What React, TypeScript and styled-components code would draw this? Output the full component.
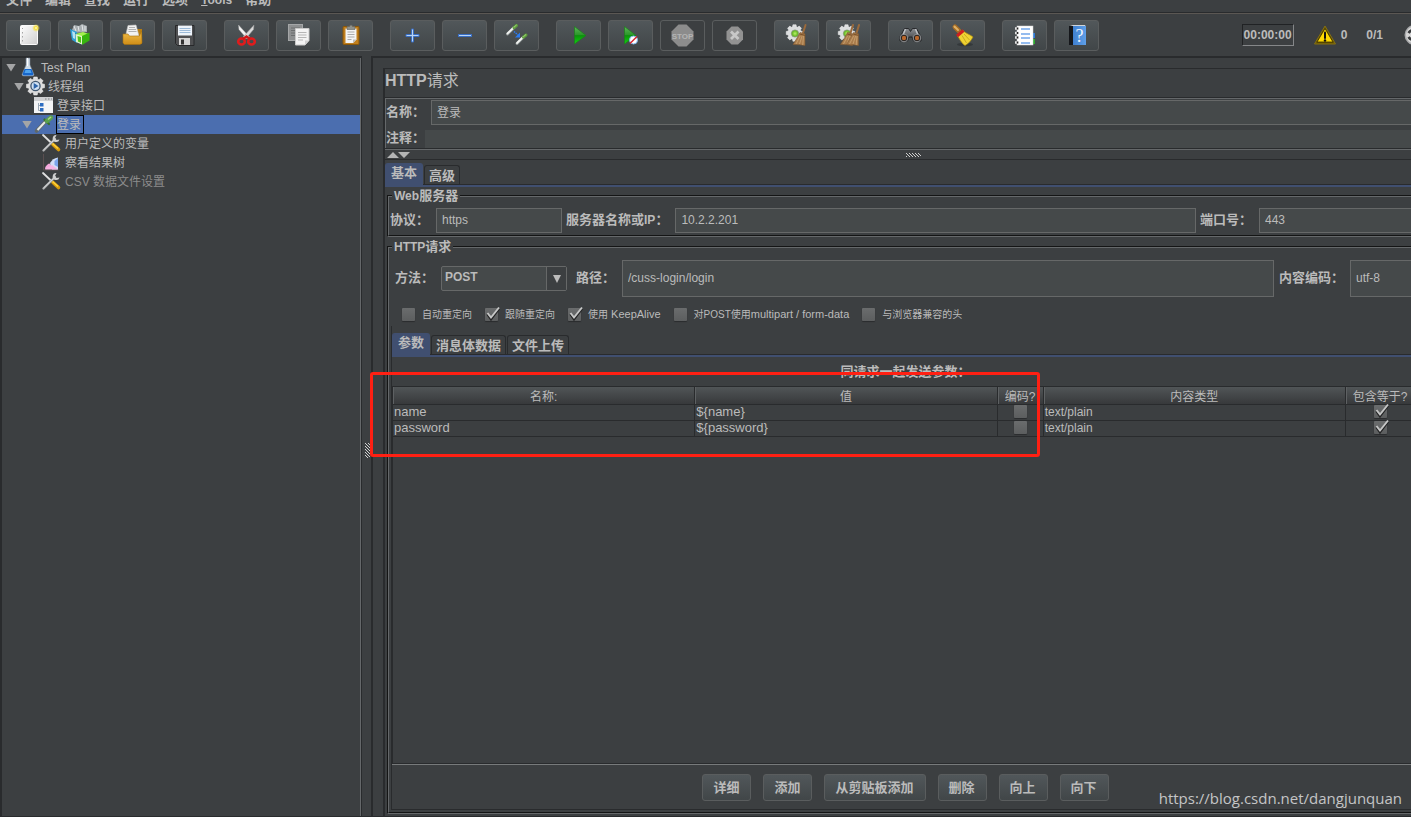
import React from "react";
import styled, { createGlobalStyle, css } from "styled-components";

const c = {
  bg: "#3c3f41",
  dark: "#292b2d",
  light: "#65686a",
  field: "#45494a",
  fieldBorder: "#666868",
  text: "#bbbbbb",
  blue: "#404f70",
  select: "#4b6eaf",
};

const Global = createGlobalStyle`
  *, *::before, *::after { box-sizing: border-box; }
  body {
    margin: 0;
    background: ${c.bg};
    color: ${c.text};
    font: 12px/16px "Liberation Sans", "Noto Sans CJK SC", sans-serif;
    overflow: hidden;
  }
  button, input, select { font: inherit; color: inherit; margin: 0; }
`;

const Frame = styled.div`
  position: relative;
  display: flex;
  flex-direction: column;
  height: 100vh;
  overflow: hidden;
  border-bottom: 1px solid ${c.dark};
`;

/* Chinese UI text runs one pixel larger than the Latin text beside it. */
const Zh = styled.span`
  font-size: 13px;
`;

/* ---------- menu bar ---------- */
const MenuBar = styled.nav`
  display: flex;
  align-items: flex-end;
  gap: 13px;
  height: 13px;
  padding: 0 6px 4px;
  border-bottom: 1px solid ${c.dark};
  font-weight: bold;
  flex: none;
`;
const MenuItem = styled.a`
  color: inherit;
  text-decoration: none;
  line-height: 16px;
  white-space: nowrap;
`;

/* ---------- tool bar ---------- */
const ToolBar = styled.div`
  display: flex;
  align-items: flex-start;
  gap: 17px;
  height: 43px;
  padding: 6px 0 0 6px;
  border-top: 1px solid #5b5753;
  overflow: hidden;
  flex: none;
`;
const ToolGroup = styled.div`
  display: flex;
  gap: 7px;
`;
const ToolButton = styled.button`
  display: flex;
  align-items: center;
  justify-content: center;
  width: 45px;
  height: 31px;
  padding: 0;
  border: 1px solid #5a5d5e;
  border-radius: 3px;
  background: linear-gradient(#51575a, #414648);
  &:disabled {
    background: none;
  }
  svg {
    width: 23px;
    height: 23px;
    overflow: visible;
  }
`;
const Status = styled.div`
  display: flex;
  align-items: center;
  height: 31px;
  margin: 0 -15px 0 auto;
  padding-bottom: 2px;
  font-weight: bold;
`;
const Timer = styled.output`
  width: 52px;
  height: 22px;
  margin-right: 20px;
  border: 1px solid;
  border-color: #202224 #858789 #858789 #202224;
  line-height: 20px;
  text-align: center;
`;
const Warnings = styled.span`
  display: flex;
  align-items: center;
  gap: 5px;
  margin-right: 19px;
`;
const Threads = styled.span`
  margin-right: 21px;
`;

/* ---------- panes ---------- */
const Body = styled.div`
  display: flex;
  flex: 1;
  min-height: 0;
`;
const TreePane = styled.aside`
  width: 362px;
  border: solid ${c.dark};
  border-width: 2px 1px 0 2px;
  box-shadow: inset -1px 0 ${c.light};
  flex: none;
`;
const Divider = styled.div`
  display: flex;
  align-items: center;
  justify-content: flex-end;
  width: 9px;
  padding: 28px 1px 0 0;
  flex: none;
`;
const Main = styled.main`
  display: flex;
  flex: 1;
  min-width: 0;
  padding: 10px 0 0 10px;
  border: solid ${c.dark};
  border-width: 2px 0 0 2px;
  overflow: hidden;
`;
const Editor = styled.div`
  display: flex;
  flex-direction: column;
  flex: 1;
  min-width: 0;
  margin-right: -6px;
  padding-bottom: 2px;
  border: solid ${c.dark};
  border-width: 1px 0 0 2px;
`;

/* ---------- tree ---------- */
const Tree = styled.ul`
  list-style: none;
  margin: 0;
  padding: 0 1px 0 0;
`;
const TreeRow = styled.li<{ $depth: number; $selected?: boolean; $off?: boolean }>`
  display: flex;
  align-items: center;
  height: 19px;
  padding-left: ${(p) => 4 + p.$depth * 8}px;
  background: ${(p) => (p.$selected ? c.select : "none")};
  color: ${(p) => (p.$off ? "#8c8c8c" : c.text)};
  > svg {
    flex: none;
    margin: 0 3px 1px 0;
    overflow: visible;
  }
`;
const Arrow = styled.span<{ $open?: boolean }>`
  width: 10px;
  height: 8px;
  margin-right: 2px;
  clip-path: polygon(0 0, 100% 0, 50% 100%);
  background: ${(p) => (p.$open ? "#a4a5a6" : "none")};
  flex: none;
`;
const TreeText = styled.span<{ $boxed?: boolean }>`
  height: 17px;
  padding: 1px 2px 0 0;
  line-height: 17px;
  outline: ${(p) => (p.$boxed ? "1px solid #000" : "none")};
`;

/* ---------- form parts ---------- */
const Title = styled.h1`
  margin: 0;
  height: 29px;
  border-bottom: 1px solid ${c.dark};
  font-size: 16px;
  line-height: 24px;
  span {
    font-weight: normal;
  }
`;
const NameBox = styled.div`
  display: flex;
  flex-direction: column;
  gap: 5px;
  padding-top: 1px;
  border: solid ${c.light};
  border-width: 1px 0 0 1px;
  box-shadow: 0 1px ${c.dark};
  margin-bottom: 1px;
`;
const Row = styled.div<{ $pad?: number }>`
  display: flex;
  align-items: center;
  padding-left: ${(p) => p.$pad || 0}px;
`;
const Label = styled.label<{ $before?: number; $after?: number }>`
  margin: 0 ${(p) => p.$after ?? 7}px 0 ${(p) => p.$before ?? 0}px;
  padding-bottom: 2px;
  font-weight: bold;
  white-space: nowrap;
  flex: none;
`;
const Field = styled.input<{ $w?: number; $tall?: boolean; $plain?: boolean }>`
  ${(p) => (p.$w ? css`width: ${p.$w}px; flex: none;` : css`flex: 1; min-width: 0;`)}
  height: ${(p) => (p.$tall ? 37 : p.$plain ? 18 : 25)}px;
  padding: 0 5px 2px;
  border: ${(p) => (p.$plain ? "0" : `1px solid ${c.fieldBorder}`)};
  background: ${c.field};
  outline: none;
`;
const Splitter = styled.div`
  display: flex;
  align-items: center;
  height: 10px;
  padding-left: 2px;
  border-top: 1px solid ${c.light};
`;
const SplitGrip = styled.span`
  display: flex;
  justify-content: center;
  flex: 1;
`;
const TabPane = styled.section<{ $edge?: boolean }>`
  display: flex;
  flex-direction: column;
  flex: 1;
  min-height: 0;
  ${(p) =>
    p.$edge
      ? css`margin: 0 0 2px 2px; border: solid ${c.dark}; border-width: 0 0 1px 1px;`
      : css`border-top: 1px solid ${c.dark};`}
`;
const Tabs = styled.div<{ $h: number }>`
  display: flex;
  align-items: flex-end;
  gap: 1px;
  height: ${(p) => p.$h}px;
  border-bottom: 2px solid ${c.blue};
  box-shadow: inset 0 -1px ${c.dark};
  flex: none;
`;
const Tab = styled.button<{ $active?: boolean }>`
  height: ${(p) => (p.$active ? 22 : 20)}px;
  padding: 0 4px;
  border: 1px solid ${c.dark};
  border-bottom: 0;
  border-radius: 3px 3px 0 0;
  background: none;
  font-size: 13px;
  font-weight: bold;
  line-height: 18px;
  ${(p) => p.$active && css`
    padding: 0 5px 3px;
    border-color: ${c.blue};
    background: ${c.blue};
  `}
`;
const Group = styled.fieldset<{ $fill?: boolean }>`
  display: flex;
  flex-direction: column;
  min-width: 0;
  margin: ${(p) => (p.$fill ? "2px 0 0 2px" : "1px 0 0 2px")};
  padding: ${(p) => (p.$fill ? "5px 0 0" : "4px 0 2px")};
  border: 2px groove ${c.light};
  ${(p) => p.$fill && css`flex: 1; min-height: 0;`}
`;
const Legend = styled.legend`
  margin-left: 3px;
  padding: 0 2px;
  font-weight: bold;
  line-height: 16px;
`;
const SelectWrap = styled.div`
  display: grid;
  grid-template-columns: 1fr 20px;
  align-items: stretch;
  width: 126px;
  height: 25px;
  border: 1px solid ${c.fieldBorder};
  border-radius: 2px;
  background: ${c.field};
  flex: none;
`;
const Select = styled.select`
  grid-area: 1 / 1 / 2 / 3;
  appearance: none;
  padding: 0 0 4px 3px;
  border: 0;
  background: none;
  font-weight: bold;
  outline: none;
`;
const SelectArrow = styled.span`
  grid-area: 1 / 2 / 2 / 3;
  display: flex;
  align-items: center;
  justify-content: center;
  border-left: 1px solid ${c.fieldBorder};
  background: ${c.bg};
  pointer-events: none;
`;
const Checks = styled.div`
  display: flex;
  align-items: center;
  gap: 13px;
  height: 24px;
  margin-top: 5px;
  padding-left: 13px;
  font-size: 11px;
  flex: none;
`;
const CheckLabel = styled.label`
  display: flex;
  align-items: center;
  gap: 7px;
  white-space: nowrap;
`;
const Small = styled.span`
  font-size: 10px;
`;
const TickBox = styled.span`
  display: inline-grid;
  width: 13px;
  height: 13px;
  vertical-align: top;
  > * { grid-area: 1 / 1; }
  svg { overflow: visible; pointer-events: none; }
`;
const Tick = styled.input`
  appearance: none;
  width: 13px;
  height: 13px;
  border-radius: 1px;
  background: linear-gradient(#6a6c6d, #5c5e5f);
  box-shadow: 0 1px 1px #2a2c2e;
`;

/* ---------- parameters table ---------- */
const Caption = styled.h2`
  margin: 0;
  height: 29px;
  padding-left: 4px;
  font-size: 13px;
  line-height: 30px;
  text-align: center;
  flex: none;
`;
const TableArea = styled.div`
  flex: 1;
  min-height: 0;
  border: solid ${c.dark};
  border-width: 1px 0 1px 1px;
  box-shadow: 0 1px #777a7b;
`;
const Table = styled.table`
  width: 100%;
  table-layout: fixed;
  border-collapse: separate;
  border-spacing: 0;
`;
const Th = styled.th<{ $w?: number }>`
  width: ${(p) => (p.$w ? p.$w + "px" : "auto")};
  height: 18px;
  padding: 3px 0 0;
  border-right: 1px solid ${c.dark};
  border-bottom: 1px solid ${c.dark};
  box-shadow: inset 1px 0 #5e6163;
  background: linear-gradient(#515557, #37393b);
  font-weight: normal;
  line-height: 14px;
  white-space: nowrap;
`;
const Td = styled.td<{ $center?: boolean; $small?: boolean }>`
  height: 16px;
  padding: 0 1px;
  border-right: 1px solid ${c.dark};
  border-bottom: 1px solid ${c.dark};
  font-size: ${(p) => (p.$small ? 12 : 13)}px;
  line-height: 14px;
  text-align: ${(p) => (p.$center ? "center" : "left")};
  vertical-align: top;
`;
const Actions = styled.div`
  display: flex;
  justify-content: center;
  gap: 12px;
  height: 45px;
  padding: 10px 0 0 4px;
  flex: none;
`;
const ActionButton = styled.button`
  height: 27px;
  padding: 0 11px 0 10px;
  border: 1px solid #5a5d5e;
  border-radius: 3px;
  background: linear-gradient(#51575a, #414648);
  font-size: 13px;
  font-weight: bold;
`;

/* ---------- overlays ---------- */
const Highlight = styled.div`
  position: absolute;
  left: 370px;
  top: 372px;
  width: 670px;
  height: 85px;
  border: 3px solid #ff2013;
  border-radius: 3px;
  pointer-events: none;
`;
const Watermark = styled.a`
  position: absolute;
  right: 9px;
  bottom: 8px;
  color: #c4c5c6;
  font: 15px/20px "Open Sans", sans-serif;
  text-decoration: none;
`;

/* ---------- drawings ---------- */
const Svg = ({ children, w = 23, h = 23 }: { children: React.ReactNode; w?: number; h?: number }) => (
  <svg width={w} height={h} viewBox={`0 0 ${w} ${h}`} aria-hidden="true">{children}</svg>
);

const gearPoints = (cx: number, cy: number, r: number, n = 8) => {
  const pts: string[] = [];
  for (let i = 0; i < n; i++) {
    const a = (i * 2 * Math.PI) / n;
    [[-0.3, 0.78], [-0.19, 1], [0.19, 1], [0.3, 0.78]].forEach(([d, k]) =>
      pts.push(`${(cx + Math.cos(a + d) * r * k).toFixed(2)},${(cy + Math.sin(a + d) * r * k).toFixed(2)}`)
    );
  }
  return pts.join(" ");
};

const Gradients = () => (
  <svg width="0" height="0" style={{ position: "absolute" }} aria-hidden="true">
    <defs>
      <linearGradient id="paper" x1="0" y1="0" x2="1" y2="1"><stop stopColor="#fff" /><stop offset="1" stopColor="#cfcfcf" /></linearGradient>
      <linearGradient id="gold" x1="0" y1="0" x2="0" y2="1"><stop stopColor="#f3c04c" /><stop offset="1" stopColor="#cf8d17" /></linearGradient>
      <linearGradient id="green" x1="0" y1="0" x2="0" y2="1"><stop stopColor="#5cb858" /><stop offset=".48" stopColor="#2c962a" /><stop offset=".52" stopColor="#0b930b" /><stop offset="1" stopColor="#10d410" /></linearGradient>
      <linearGradient id="steel" x1="0" y1="0" x2="0" y2="1"><stop stopColor="#8b8e92" /><stop offset="1" stopColor="#3a3c3f" /></linearGradient>
      <linearGradient id="book" x1="0" y1="0" x2="1" y2="0"><stop stopColor="#3f80d0" /><stop offset="1" stopColor="#5f9fe8" /></linearGradient>
      <radialGradient id="spark"><stop stopColor="#fffdd0" /><stop offset=".4" stopColor="#f6e14c" /><stop offset="1" stopColor="#f6e14c" stopOpacity="0" /></radialGradient>
      <radialGradient id="lime"><stop stopColor="#b8f26a" /><stop offset="1" stopColor="#4fa80c" /></radialGradient>
    </defs>
  </svg>
);

const Straw = ({ x = 0 }: { x?: number }) => (
  <g transform={`translate(${x} 0)`}>
    <path d="M18 1 15.5 9" stroke="#9a6a3c" strokeWidth="2" strokeLinecap="round" />
    <path d="M12.5 8.5 17.5 9.8 17.5 21.5 12 20.8 5.5 20.5 9.5 14Z" fill="#a97c4c" stroke="#7d5730" strokeWidth=".6" />
    <path d="M12.6 12 8.5 20M14.6 12 12 20M16 12 15.2 21" stroke="#d1ab78" strokeWidth=".7" />
    <path d="M12.2 10 17.5 11.4" stroke="#7b5228" strokeWidth="1" />
  </g>
);
const CleanGear = () => (
  <>
    <polygon points={gearPoints(9.5, 9, 8.4, 8)} fill="#dcdedf" stroke="#f4f4f4" strokeWidth=".5" />
    <circle cx="10" cy="9.5" r="3.6" fill="url(#lime)" stroke="#8b9a80" strokeWidth=".8" />
  </>
);
const Dropper = ({ x, y }: { x: number; y: number }) => (
  <g transform={`translate(${x} ${y})`} strokeLinecap="round">
    <path d="M1 9.5 7.5 3" stroke="#8d9494" strokeWidth="3" />
    <path d="M1 9 7.2 3" stroke="#f1f3f1" strokeWidth="1.8" />
    <path d="M7.5 3.2 10 1" stroke="#5c9c3c" strokeWidth="3" />
    <path d="M7.5 2.7 9.8 .7" stroke="#a6d47c" strokeWidth="1" />
  </g>
);

const icons: Record<string, React.ReactNode> = {
  new: (
    <Svg>
      <rect x="3.5" y="1.5" width="17" height="19" rx="1" fill="url(#paper)" stroke="#fafafa" />
      <path d="M5.500 4v1M5.500 8v1.500M5.500 12v1.500M5.500 16v1.500" stroke="#a5a5a5" />
      <circle cx="19" cy="4" r="4" fill="url(#spark)" />
    </Svg>
  ),
  templates: (
    <Svg>
      <path d="M3 6 5 1 10 2 13 0 18 2 18 8 4 9Z" fill="#a9afb2" />
      <path d="M5 2 7 7M9 2 10 7M13 1 14 7M16 2 16 7" stroke="#e4e8ea" />
      <path d="M1 5 8 8 8 19 3 16Z" fill="#2d9fd8" /><path d="M3 7 6 8.500 6 15 4 14Z" fill="#b7e3f5" />
      <path d="M6 9 13 11 13 20.500 7 18Z" fill="#1f7fb5" />
      <path d="M6.500 10 14 8 20 10 13 13Z" fill="#a2f24d" />
      <path d="M6.500 10 13 12 13 20.500 7 18Z" fill="#e4f7ca" /><path d="M8.500 12 12 13 12 19 9 17.500Z" fill="#50c21a" />
      <path d="M13 12 20.500 8.500 20.500 16.500 13 21Z" fill="#37b40f" />
    </Svg>
  ),
  open: (
    <Svg>
      <path d="M15 5h6v15h-6Z" fill="#b77d12" />
      <path d="M5 10 7 1.500 15 1 18 12 5 13Z" fill="#f2f2f2" stroke="#c6c6c6" strokeWidth=".6" />
      <path d="M8 3.500h6M7.500 5.500h7.500M7.500 7.500h8" stroke="#a0a0a0" strokeWidth=".8" />
      <path d="M2 10h5l1.500 2H18.500L20.500 7l.5 12-2 1.500H3.500L2 19Z" fill="url(#gold)" stroke="#a8720e" strokeWidth=".6" />
    </Svg>
  ),
  save: (
    <Svg>
      <path d="M2.500 1.500h18.500v20H4.500l-2-2Z" fill="#4f5052" stroke="#27282a" />
      <rect x="5" y="1.500" width="14" height="10" fill="#eef4fa" />
      <path d="M6.500 4.500h11M6.500 6.500h11M6.500 8.500h11" stroke="#9dbbd9" />
      <rect x="6" y="14" width="11" height="7" fill="#d5d5d5" /><rect x="8" y="15.500" width="3" height="5" fill="#333" />
    </Svg>
  ),
  cut: (
    <Svg>
      <path d="M3.500 1 4 5.500 12 15 14.500 13Z" fill="#f3f3f3" stroke="#a8a8a8" strokeWidth=".5" />
      <path d="M19 1 18.500 5.500 10.500 15 8 13Z" fill="#dadada" stroke="#999" strokeWidth=".5" />
      <ellipse cx="6.500" cy="17.500" rx="3.300" ry="3" fill="none" stroke="#e01c1c" strokeWidth="2.600" />
      <ellipse cx="16.500" cy="17.500" rx="3.300" ry="3" fill="none" stroke="#e01c1c" strokeWidth="2.600" />
      <path d="M8 15 11.500 12.500 15 15" fill="none" stroke="#d01616" strokeWidth="2.600" />
    </Svg>
  ),
  copy: (
    <Svg>
      <rect x="1.500" y=".5" width="14" height="16" fill="#8d8f90" stroke="#a4a6a7" />
      <path d="M4 4h9M4 6.500h9M4 9h4M4 11.500h4" stroke="#6c6e6f" />
      <path d="M8.500 4.500h13.500v12l-4 4.500H8.500Z" fill="#f3f3f3" stroke="#c9c9c9" />
      <path d="M11 8.500h8.500M11 11h8.500M11 13.500h8.500M11 16h5" stroke="#b5b5b5" />
      <path d="M22 16.500h-4V21Z" fill="#d0d0d0" />
    </Svg>
  ),
  paste: (
    <Svg>
      <rect x="4" y="2.500" width="16" height="18" rx="1" fill="#c07f1d" stroke="#8a5608" />
      <path d="M6.500 4.500h11v11l-3.500 3.500H6.500Z" fill="#f4f4f4" />
      <path d="M8.500 8h7M8.500 10.500h7M8.500 13h7M8.500 15.500h4" stroke="#ababab" />
      <path d="M17.500 15.500H14V19Z" fill="#bdbdbd" />
      <path d="M8 2.500h2.500a1.500 1.500 0 0 1 3 0H16v3H8Z" fill="#8f918c" stroke="#60625e" strokeWidth=".6" />
    </Svg>
  ),
  plus: (<Svg><path d="M10.500 5h2v5.500h5.500v2h-5.500v5.500h-2v-5.500H5v-2h5.500Z" fill="#b9d5f5" stroke="#3a6fc4" /></Svg>),
  minus: (<Svg><rect x="5.500" y="10.500" width="13" height="2" fill="#b9d5f5" stroke="#3a6fc4" /></Svg>),
  toggle: (
    <Svg>
      <Dropper x={1.5} y={0.5} /><Dropper x={11} y={10} />
      <path d="M9 7.500 13 11" stroke="#2b7bf0" strokeWidth="1.600" strokeDasharray="1.500 .8" /><path d="M15 8.500v5h-5Z" fill="#2b7bf0" />
    </Svg>
  ),
  play: (<Svg><path d="M7.500 2.500 19 11.500 7.500 20Z" fill="url(#green)" stroke="#1d7d1d" strokeWidth=".7" /></Svg>),
  playNow: (
    <Svg>
      <path d="M5.500 2.500 17 11.500 5.500 20Z" fill="url(#green)" stroke="#1d7d1d" strokeWidth=".7" />
      <circle cx="14.500" cy="16" r="4" fill="#fff" stroke="#7fb4e8" /><path d="M11 19.500 18 12.500" stroke="#d8232a" strokeWidth="1.500" />
    </Svg>
  ),
  stop: (
    <Svg>
      <path d="M7.500.5h8l7 7v8l-7 7h-8l-7-7v-8Z" fill="#8c8c8c" />
      <text x="11.500" y="14.500" textAnchor="middle" fontSize="8" fontWeight="bold" fill="#b4b4b4" fontFamily="Liberation Sans, sans-serif">STOP</text>
    </Svg>
  ),
  shutdown: (
    <Svg>
      <path d="M8.500 2.500h6.500l5 5v8l-5 5h-6.500l-5-5v-8Z" fill="#929292" />
      <path d="m8 7.500 7.500 7.500M15.500 7.500l-7.500 7.500" stroke="#c8c8c8" strokeWidth="2.800" />
    </Svg>
  ),
  clear: (<Svg><CleanGear /><Straw x={2.5} /></Svg>),
  clearAll: (<Svg><CleanGear /><Straw x={-2} /><Straw x={4} /></Svg>),
  search: (
    <Svg>
      <path d="M5.500 4.500h4l2 3 2-3h4L22 13v4h-7.500l-1.500-4h-3l-1.500 4H1v-4Z" fill="url(#steel)" stroke="#17181a" strokeWidth=".8" />
      <path d="M6.500 5 4 11M16.500 5 19 11" stroke="#c0c3c6" strokeWidth="1.400" />
      <circle cx="5" cy="14" r="3.800" fill="#24201e" stroke="#9a9c9f" strokeWidth=".9" /><circle cx="18" cy="14" r="3.800" fill="#24201e" stroke="#9a9c9f" strokeWidth=".9" />
      <circle cx="5" cy="14" r="2.200" fill="#b9672c" /><circle cx="18" cy="14" r="2.200" fill="#b9672c" />
    </Svg>
  ),
  resetSearch: (
    <Svg>
      <ellipse cx="14" cy="20.500" rx="8" ry="1.800" fill="#24272a" opacity=".5" />
      <path d="M4 3 8 7" stroke="#a56c25" strokeWidth="5" strokeLinecap="round" /><path d="M3.500 2.500 7 6" stroke="#deb066" strokeWidth="2" strokeLinecap="round" />
      <path d="M12 6.500C14 9 20 11 22 13c-2 4-5 7-8 8.500C11 20 8 14 6.500 12Z" fill="#efd333" stroke="#ab8b10" strokeWidth=".7" />
      <path d="M11 11.500 15.500 19M13 10 18.500 16" stroke="#b99a17" strokeWidth=".7" />
      <path d="M6 12 12.500 6.500" stroke="#cf1f1f" strokeWidth="3" />
    </Svg>
  ),
  functions: (
    <Svg>
      <rect x="17" y="9" width="5" height="5" fill="#2c7ad6" /><rect x="17" y="15" width="5" height="5" fill="#2da82d" />
      <rect x="4" y="2" width="16" height="19" fill="#fff" stroke="#d5d5d5" strokeWidth=".5" />
      <path d="M8 5h9M8 10h9M8 14h9M8 19h9" stroke="#2a7be0" strokeWidth="1.200" />
      <path d="M2 4.500h4M2 9h4M2 13.500h4M2 18.500h4" stroke="#e6e6e6" strokeWidth="2.600" />
      <path d="M4.500 3.500v2M4.500 8v2M4.500 12.500v2M4.500 17.500v2" stroke="#222" strokeWidth="1.500" />
    </Svg>
  ),
  help: (
    <Svg>
      <path d="M4 2h4v19H4Z" fill="#15171b" /><path d="M5 1h15l.500 1H8Z" fill="#d2d6da" />
      <path d="M8 2h13v19H8Z" fill="url(#book)" />
      <text x="14.500" y="18" textAnchor="middle" fontSize="18" fill="#eef5fc" fontFamily="Liberation Serif, serif">?</text>
    </Svg>
  ),
  warning: (
    <Svg w={22} h={20}>
      <path d="M11 1 21.500 19H.5Z" fill="#6b5600" stroke="#857012" strokeLinejoin="round" /><path d="M11 3.500 19 17H3Z" fill="#ffd900" stroke="#332b00" strokeWidth=".8" />
      <path d="M11 7.500v5.500" stroke="#111" strokeWidth="2" strokeLinecap="round" /><circle cx="11" cy="15.500" r="1.200" fill="#111" />
    </Svg>
  ),
  remote: (
    <Svg w={22} h={20}>
      <circle cx="10.500" cy="10" r="10" fill="#a9aaab" /><circle cx="10.500" cy="10" r="8.500" fill="#d6d6d6" />
      <path d="M4.500 8c2-3 5-3 7-2M4.500 12c2 3 5 3 7 2" stroke="#37393b" strokeWidth="2.600" fill="none" />
    </Svg>
  ),
  plan: (
    <Svg w={20} h={18}>
      <path d="M8 0h4v7l4 9.500q0 1.500-2 1.500h-8q-2 0-2-1.500l4-9.500Z" fill="#cfdbe6" stroke="#75828d" strokeWidth=".6" />
      <path d="M6.500 11h7l2 5q0 1.500-2 1.500H6.500q-2 0-2-1.500Z" fill="#1767cb" /><path d="M7.500 12h5l1 3H6.500Z" fill="#4fa4ee" /><path d="M9.500 0v8" stroke="#fff" />
    </Svg>
  ),
  group: (
    <Svg w={19} h={18}>
      <polygon points={gearPoints(9.5, 9, 9.2, 8)} fill="#dcdcdc" stroke="#f5f5f5" strokeWidth=".5" />
      <circle cx="9.500" cy="9" r="4.600" fill="#cfe0f2" stroke="#40576f" strokeWidth="1.300" /><path d="M7.700 6 12.500 9 7.700 12Z" fill="#2c63a8" />
    </Svg>
  ),
  page: (
    <Svg w={20} h={18}>
      <rect x="0" y="1" width="19" height="16" fill="#f4f5f6" /><path d="M0 1h19v4H0Z" fill="#cfd1d3" /><path d="M11 3h1.500M14 3h1.500M17 3h1" stroke="#7f8285" />
      <path d="M4.500 7v7.500h3M4.500 9.500h3" fill="none" stroke="#9aa7b5" /><rect x="6" y="7" width="3.500" height="3.500" fill="#2c6cc0" /><rect x="6" y="12" width="3.500" height="3.500" fill="#2c6cc0" />
    </Svg>
  ),
  sampler: (
    <Svg w={20} h={18}>
      <path d="M2.500 16 11 7" stroke="#60686a" strokeWidth="3.600" strokeLinecap="round" /><path d="M3.500 15 11 7" stroke="#e6ebe8" strokeWidth="2" />
      <path d="m10.500 4.500 4.500 4.500" stroke="#37702c" strokeWidth="2.200" strokeLinecap="round" /><path d="M13 6 17 2.500" stroke="#5aa04c" strokeWidth="4.400" strokeLinecap="round" /><path d="M14 4.500 17 2" stroke="#a8d88c" strokeWidth="1.400" />
    </Svg>
  ),
  config: (
    <Svg w={20} h={18}>
      <path d="M1 1 10 9.500" stroke="#e0e0e0" strokeWidth="1.800" strokeLinecap="round" /><path d="M11 10.500 16.500 15.500" stroke="#d79b0b" strokeWidth="3.600" strokeLinecap="round" /><path d="M10.500 9.500 16 14.500" stroke="#ffd23c" strokeWidth="1.600" />
      <path d="M1.500 16.500 13 5" stroke="#a8aaab" strokeWidth="2.400" strokeLinecap="round" /><path d="M1.500 16 12 6" stroke="#e8e8e8" strokeWidth=".8" />
      <path d="M14.500 1a3.500 3.500 0 1 0 3 4.500l-3 .5-1.500-2Z" fill="#cfcfcf" />
    </Svg>
  ),
  results: (
    <Svg w={20} h={18}>
      <path d="M1.500 1v16h15" stroke="#5a4f50" fill="none" /><path d="M3 16c0-3 2-4 4-5.500 2 0 3 3.500 4 5.500Z" fill="#f4a9dc" />
      <path d="M8 10c2-3 4-5 8-5.500v12H10Z" fill="#d3dff6" /><path d="M12.500 8 16 5V14l-3.500-2Z" fill="#7aa5ea" /><path d="M3 16.500c3-3.500 5-2.500 7-4.500l6 4.500Z" fill="#f5b4e2" />
    </Svg>
  ),
};

const ResizeGrip = ({ w, h }: { w: number; h: number }) => {
  const dots: React.ReactNode[] = [];
  for (let y = 0; y < h; y++)
    for (let x = 0; x < w; x++)
      if ((x - y + 15) % 3 === 0)
        dots.push(<rect key={`${x}-${y}`} x={x} y={y} width="1" height="1" fill="#d0d0d0" />);
  return <Svg w={w} h={h}>{dots}</Svg>;
};

const Check = ({ checked = false, name, children }: { checked?: boolean; name?: string; children?: React.ReactNode }) => {
  const box = (
    <TickBox>
      <Tick type="checkbox" defaultChecked={checked} aria-label={name} />
      {checked && (
        <svg width="13" height="13" viewBox="0 0 13 13" aria-hidden="true">
          <path d="M2.500 6 6 11 14 .500" fill="none" stroke="#232425" strokeWidth="2.600" />
          <path d="M2.500 5 6 9.500 14 -.500" fill="none" stroke="#c6c7c7" strokeWidth="2" />
        </svg>
      )}
    </TickBox>
  );
  return children ? <CheckLabel>{box}<span>{children}</span></CheckLabel> : box;
};

/* ---------- data ---------- */
const toolGroups: [string, string][][] = [
  [["new", "新建"], ["templates", "模板"], ["open", "打开"], ["save", "保存"]],
  [["cut", "剪切"], ["copy", "复制"], ["paste", "粘贴"]],
  [["plus", "展开"], ["minus", "折叠"], ["toggle", "切换"]],
  [["play", "启动"], ["playNow", "不停顿开始"], ["stop", "停止"], ["shutdown", "关闭"]],
  [["clear", "清除"], ["clearAll", "清除全部"]],
  [["search", "查找"], ["resetSearch", "重置查找"]],
  [["functions", "函数助手"], ["help", "帮助"]],
];

const nodes: { depth: number; icon: string; text: string; open?: boolean; selected?: boolean; off?: boolean }[] = [
  { depth: 0, icon: "plan", text: "Test Plan", open: true },
  { depth: 1, icon: "group", text: "线程组", open: true },
  { depth: 2, icon: "page", text: "登录接口" },
  { depth: 2, icon: "sampler", text: "登录", open: true, selected: true },
  { depth: 3, icon: "config", text: "用户定义的变量" },
  { depth: 3, icon: "results", text: "察看结果树" },
  { depth: 3, icon: "config", text: "CSV 数据文件设置", off: true },
];

const params = [
  { name: "name", value: "${name}", type: "text/plain" },
  { name: "password", value: "${password}", type: "text/plain" },
];

export default function App() {
  return (
    <Frame>
      <Global />
      <Gradients />
      <MenuBar>
        {["文件", "编辑", "查找", "运行", "选项"].map((m) => (
          <MenuItem href="#" key={m}><Zh>{m}</Zh></MenuItem>
        ))}
        <MenuItem href="#"><u>T</u>ools</MenuItem>
        <MenuItem href="#"><Zh>帮助</Zh></MenuItem>
      </MenuBar>

      <ToolBar>
        {toolGroups.map((group, i) => (
          <ToolGroup key={i}>
            {group.map(([id, name]) => (
              <ToolButton key={id} aria-label={name} disabled={id === "stop" || id === "shutdown"}>{icons[id]}</ToolButton>
            ))}
          </ToolGroup>
        ))}
        <Status>
          <Timer>00:00:00</Timer>
          <Warnings>{icons.warning}0</Warnings>
          <Threads>0/1</Threads>
          {icons.remote}
        </Status>
      </ToolBar>

      <Body>
        <TreePane>
          <Tree>
            {nodes.map((n) => (
              <TreeRow key={n.text} $depth={n.depth} $selected={n.selected} $off={n.off}>
                <Arrow $open={n.open} />
                {icons[n.icon]}
                <TreeText $boxed={n.selected}>{n.text}</TreeText>
              </TreeRow>
            ))}
          </Tree>
        </TreePane>
        <Divider><ResizeGrip w={5} h={15} /></Divider>

        <Main>
          <Editor>
            <Title>HTTP<span>请求</span></Title>
            <NameBox>
              <Row>
                <Label htmlFor="name" $after={6}><Zh>名称：</Zh></Label>
                <Field id="name" defaultValue="登录" />
              </Row>
              <Row>
                <Label htmlFor="comment" $after={0}><Zh>注释：</Zh></Label>
                <Field id="comment" $plain />
              </Row>
            </NameBox>
            <Splitter>
              <Svg w={23} h={6}><path d="M0 6 6 0 12 6ZM11 0H23L17 6Z" fill="#b4b5b5" /></Svg>
              <SplitGrip><ResizeGrip w={15} h={4} /></SplitGrip>
            </Splitter>

            <TabPane>
              <Tabs $h={27}>
                <Tab $active>基本</Tab>
                <Tab>高级</Tab>
              </Tabs>

              <Group>
                <Legend>Web<Zh>服务器</Zh></Legend>
                <Row $pad={1}>
                  <Label htmlFor="protocol"><Zh>协议：</Zh></Label>
                  <Field id="protocol" $w={126} defaultValue="https" />
                  <Label htmlFor="server" $before={4}><Zh>服务器名称或</Zh>IP<Zh>：</Zh></Label>
                  <Field id="server" defaultValue="10.2.2.201" />
                  <Label htmlFor="port" $before={4}><Zh>端口号：</Zh></Label>
                  <Field id="port" $w={156} defaultValue="443" />
                </Row>
              </Group>

              <Group $fill>
                <Legend>HTTP<Zh>请求</Zh></Legend>
                <Row $pad={6}>
                  <Label htmlFor="method"><Zh>方法：</Zh></Label>
                  <SelectWrap>
                    <Select id="method" defaultValue="POST">
                      <option>POST</option>
                      <option>GET</option>
                    </Select>
                    <SelectArrow><Svg w={8} h={8}><path d="M0 0h8L4 8Z" fill="#bbb" /></Svg></SelectArrow>
                  </SelectWrap>
                  <Label htmlFor="path" $before={9}><Zh>路径：</Zh></Label>
                  <Field id="path" $tall defaultValue="/cuss-login/login" />
                  <Label htmlFor="encoding" $before={5} $after={6}><Zh>内容编码：</Zh></Label>
                  <Field id="encoding" $tall $w={65} defaultValue="utf-8" />
                </Row>
                <Checks>
                  <Check><Small>自动重定向</Small></Check>
                  <Check checked><Small>跟随重定向</Small></Check>
                  <Check checked><Small>使用</Small> KeepAlive</Check>
                  <Check><Small>对POST使用</Small>multipart / form-data</Check>
                  <Check><Small>与浏览器兼容的头</Small></Check>
                </Checks>

                <TabPane $edge>
                  <Tabs $h={31}>
                    <Tab $active>参数</Tab>
                    <Tab>消息体数据</Tab>
                    <Tab>文件上传</Tab>
                  </Tabs>
                  <Caption>同请求一起发送参数：</Caption>
                  <TableArea>
                    <Table>
                      <thead>
                        <tr>
                          <Th>名称:</Th>
                          <Th>值</Th>
                          <Th $w={46}>编码?</Th>
                          <Th>内容类型</Th>
                          <Th $w={69}>包含等于?</Th>
                        </tr>
                      </thead>
                      <tbody>
                        {params.map((p) => (
                          <tr key={p.name}>
                            <Td>{p.name}</Td>
                            <Td>{p.value}</Td>
                            <Td $center><Check name="编码" /></Td>
                            <Td $small>{p.type}</Td>
                            <Td $center><Check checked name="包含等于" /></Td>
                          </tr>
                        ))}
                      </tbody>
                    </Table>
                  </TableArea>
                  <Actions>
                    {["详细", "添加", "从剪贴板添加", "删除", "向上", "向下"].map((b) => (
                      <ActionButton key={b}>{b}</ActionButton>
                    ))}
                  </Actions>
                </TabPane>
              </Group>
            </TabPane>
          </Editor>
        </Main>
      </Body>
      <Highlight />
      <Watermark href="https://blog.csdn.net/dangjunquan">https://blog.csdn.net/dangjunquan</Watermark>
    </Frame>
  );
}
